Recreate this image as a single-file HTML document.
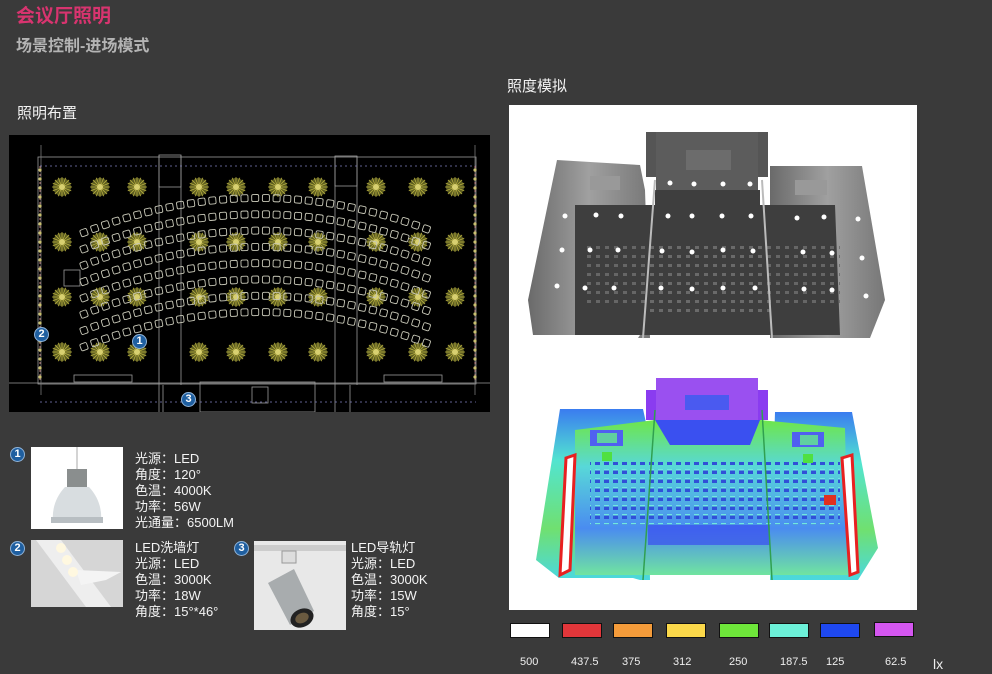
<!DOCTYPE html>
<html><head><meta charset="utf-8">
<style>
*{margin:0;padding:0;box-sizing:border-box}
body{width:992px;height:674px;background:#3a3a3a;position:relative;overflow:hidden;font-family:"Liberation Sans","Noto Sans CJK SC",sans-serif;color:#fff}
.a{position:absolute;white-space:nowrap}
.t1{left:16px;top:1px;font-size:19px;font-weight:bold;color:#d8346f}
.t2{left:16px;top:32px;font-size:16px;font-weight:bold;color:#b4b4b4}
.h{font-size:15px;color:#f2f2f2}
.badge{position:absolute;width:15px;height:15px;border-radius:50%;background:#1f5fa0;border:1px solid #8fb3d8;color:#fff;font-size:11px;font-weight:bold;text-align:center;line-height:13px}
.spec{position:absolute;font-size:13px;line-height:16px;color:#f4f4f4;white-space:nowrap}
.sw{position:absolute;top:623px;width:40px;height:15px;border:1px solid #111}
.lb{position:absolute;top:656px;font-size:11px;color:#eee}
</style></head><body>
<div class="a t1">会议厅照明</div>
<div class="a t2">场景控制-进场模式</div>
<div class="a h" style="left:17px;top:102px">照明布置</div>
<div class="a h" style="left:507px;top:75px">照度模拟</div>

<svg class="a" style="left:9px;top:135px" width="481" height="277" viewBox="9 135 481 277" id="plan">
<rect x="9" y="135" width="481" height="277" fill="#000"/>
<g stroke="#9a9a9a" stroke-width="0.8" fill="none">
<rect x="38" y="157" width="438" height="227"/>
<line x1="9" y1="383" x2="490" y2="383"/>
<line x1="41" y1="145" x2="41" y2="395" stroke="#777"/>
<line x1="475" y1="145" x2="475" y2="395" stroke="#777"/>
<rect x="159" y="155" width="22" height="32"/>
<line x1="159" y1="155" x2="159" y2="412"/><line x1="181" y1="155" x2="181" y2="385"/>
<rect x="335" y="156" width="22" height="30"/>
<line x1="335" y1="156" x2="335" y2="412"/><line x1="357" y1="156" x2="357" y2="385"/>
<rect x="200" y="382" width="115" height="30"/>
<rect x="252" y="387" width="16" height="16"/>
<rect x="74" y="375" width="58" height="7"/>
<rect x="384" y="375" width="58" height="7"/>
<rect x="64" y="270" width="16" height="16"/>
<line x1="163" y1="385" x2="163" y2="412"/><line x1="350" y1="385" x2="350" y2="412"/>
</g>
<line x1="40" y1="402" x2="476" y2="402" stroke="#8080c0" stroke-width="0.8" stroke-dasharray="2 3"/>
<line x1="40" y1="166" x2="476" y2="166" stroke="#8080c0" stroke-width="0.8" stroke-dasharray="2 3"/>
<line x1="40" y1="166" x2="40" y2="380" stroke="#c08080" stroke-width="1" stroke-dasharray="2 2"/>
<line x1="475" y1="166" x2="475" y2="380" stroke="#c08080" stroke-width="1" stroke-dasharray="2 2"/>
<g id="lamps"></g>
<g id="seats" stroke="#c8c8b8" stroke-width="0.9" fill="none"></g>
<g id="wl" fill="#c8c070"></g>
</svg>
<div class="badge" style="left:34px;top:327px">2</div>
<div class="badge" style="left:132px;top:334px">1</div>
<div class="badge" style="left:181px;top:392px">3</div>

<svg class="a" style="left:509px;top:105px" width="408" height="505" viewBox="509 105 408 505">
<defs>
<linearGradient id="gw" x1="0" x2="1"><stop offset="0" stop-color="#6a6a6a"/><stop offset="0.5" stop-color="#a0a0a0"/><stop offset="1" stop-color="#777"/></linearGradient>
<linearGradient id="cw" x1="0" x2="0" y1="0" y2="1"><stop offset="0" stop-color="#3a7cf0"/><stop offset="0.3" stop-color="#52e4d0"/><stop offset="0.7" stop-color="#70e070"/><stop offset="1" stop-color="#4ad8e0"/></linearGradient>
<linearGradient id="cf" x1="0" x2="0" y1="0" y2="1"><stop offset="0" stop-color="#6ee64a"/><stop offset="0.3" stop-color="#58d8d8"/><stop offset="0.7" stop-color="#4a8cf0"/><stop offset="1" stop-color="#70e4a0"/></linearGradient>
<pattern id="ps" width="9" height="9" patternUnits="userSpaceOnUse"><rect x="2" y="3" width="4" height="3" fill="#6a6a6a"/></pattern>
<pattern id="pc" width="9" height="9" patternUnits="userSpaceOnUse"><rect x="1" y="2" width="5" height="4" fill="#3050d8"/><rect x="1" y="1" width="5" height="1.5" fill="#70e8e0"/></pattern>
</defs>
<rect x="509" y="105" width="408" height="505" fill="#fff"/>
<polygon points="557,160 640,165 645,190 650,338 638,338 640,335 533,335 528,300" fill="url(#gw)"/>
<polygon points="770,166 862,166 885,300 870,338 770,338" fill="url(#gw)"/>
<rect x="646" y="132" width="122" height="45" fill="#555"/>
<rect x="656" y="132" width="102" height="60" fill="#5c5c5c"/>
<rect x="686" y="150" width="45" height="20" fill="#6c6c6c"/>
<polygon points="575,205 655,205 655,190 760,190 760,205 835,205 840,335 575,335" fill="#3e3e3e"/>
<polygon points="585,240 840,240 840,305 585,305" fill="url(#ps)" opacity="0.9"/>
<polygon points="650,240 760,240 770,315 645,315" fill="url(#ps)"/>
<line x1="655" y1="180" x2="643" y2="338" stroke="#bbb" stroke-width="2"/>
<line x1="762" y1="180" x2="772" y2="338" stroke="#bbb" stroke-width="2"/>
<rect x="590" y="176" width="30" height="14" fill="#999"/>
<rect x="795" y="180" width="32" height="15" fill="#999"/>
<g fill="#fff"><circle cx="670" cy="183" r="2.5"/><circle cx="694" cy="184" r="2.5"/><circle cx="723" cy="184" r="2.5"/><circle cx="750" cy="184" r="2.5"/><circle cx="596" cy="215" r="2.5"/><circle cx="621" cy="216" r="2.5"/><circle cx="668" cy="216" r="2.5"/><circle cx="692" cy="216" r="2.5"/><circle cx="722" cy="216" r="2.5"/><circle cx="751" cy="216" r="2.5"/><circle cx="797" cy="218" r="2.5"/><circle cx="824" cy="217" r="2.5"/><circle cx="590" cy="250" r="2.5"/><circle cx="618" cy="250" r="2.5"/><circle cx="662" cy="251" r="2.5"/><circle cx="692" cy="252" r="2.5"/><circle cx="723" cy="250" r="2.5"/><circle cx="753" cy="251" r="2.5"/><circle cx="803" cy="252" r="2.5"/><circle cx="832" cy="253" r="2.5"/><circle cx="585" cy="288" r="2.5"/><circle cx="614" cy="288" r="2.5"/><circle cx="661" cy="288" r="2.5"/><circle cx="692" cy="289" r="2.5"/><circle cx="723" cy="288" r="2.5"/><circle cx="755" cy="288" r="2.5"/><circle cx="804" cy="289" r="2.5"/><circle cx="832" cy="290" r="2.5"/><circle cx="557" cy="286" r="2.5"/><circle cx="562" cy="250" r="2.5"/><circle cx="565" cy="216" r="2.5"/><circle cx="858" cy="219" r="2.5"/><circle cx="862" cy="258" r="2.5"/><circle cx="866" cy="296" r="2.5"/></g>
<polygon points="560,409 643,409 648,432 650,580 640,580 633,578 559,578 536,560" fill="url(#cw)"/>
<polygon points="775,412 852,412 878,548 858,580 770,580" fill="url(#cw)"/>
<rect x="646" y="390" width="122" height="30" fill="#8a3cf0"/>
<rect x="656" y="378" width="102" height="45" fill="#9a50f0"/>
<rect x="685" y="395" width="44" height="15" fill="#4a5af0"/>
<polygon points="575,430 655,420 760,420 845,428 848,575 575,575" fill="url(#cf)"/>
<polygon points="655,420 760,420 750,445 670,445" fill="#3a50f0"/>
<polygon points="590,462 840,462 840,525 590,525" fill="url(#pc)"/>
<polygon points="648,525 770,525 770,545 648,545" fill="#3a4ef0" opacity="0.7"/>
<rect x="590" y="430" width="33" height="16" fill="#5060f0"/><rect x="597" y="433" width="20" height="10" fill="#60d0a0"/>
<rect x="792" y="432" width="32" height="15" fill="#5060f0"/><rect x="800" y="435" width="18" height="10" fill="#60d0a0"/>
<rect x="602" y="452" width="10" height="9" fill="#50e040"/><rect x="803" y="454" width="10" height="9" fill="#50e040"/>
<rect x="824" y="495" width="12" height="10" fill="#e03020"/>
<path d="M566,458 L575,455 L570,570 L560,575 Z" fill="#fff" stroke="#e82020" stroke-width="3"/>
<path d="M842,458 L852,455 L858,572 L850,575 Z" fill="#fff" stroke="#e82020" stroke-width="3"/>
<line x1="655" y1="410" x2="643" y2="580" stroke="#30a050" stroke-width="1.5"/>
<line x1="762" y1="410" x2="772" y2="580" stroke="#30a050" stroke-width="1.5"/>
</svg>

<div class="badge" style="left:10px;top:447px">1</div>
<div class="a" style="left:31px;top:447px;width:92px;height:82px;background:#fff">
<svg width="92" height="82"><line x1="46" y1="0" x2="46" y2="22" stroke="#aaa"/><rect x="36" y="22" width="20" height="18" fill="#8a8e8e"/><path d="M34,40 L58,40 Q72,55 70,76 L22,76 Q20,55 34,40Z" fill="#d8dde0"/><rect x="20" y="70" width="52" height="6" fill="#b8bec2"/></svg></div>
<div class="spec" style="left:135px;top:451px">光源：LED<br>角度：120°<br>色温：4000K<br>功率：56W<br>光通量：6500LM</div>
<div class="badge" style="left:10px;top:541px">2</div>
<div class="a" style="left:31px;top:540px;width:92px;height:67px;background:#d6d6d6">
<svg width="92" height="67"><polygon points="5,0 30,0 80,67 55,67" fill="#eee"/><polygon points="45,30 90,32 75,40 50,45" fill="#f4f4f4"/><circle cx="30" cy="8" r="5" fill="#fff8e0"/><circle cx="36" cy="20" r="5" fill="#fff8e0"/><circle cx="42" cy="32" r="5" fill="#fff8e0"/></svg></div>
<div class="spec" style="left:135px;top:540px">LED洗墙灯<br>光源：LED<br>色温：3000K<br>功率：18W<br>角度：15°*46°</div>
<div class="badge" style="left:234px;top:541px">3</div>
<div class="a" style="left:254px;top:541px;width:92px;height:89px;background:#e8e8e8">
<svg width="92" height="89"><rect x="0" y="4" width="92" height="6" fill="#ccc"/><rect x="28" y="10" width="14" height="12" fill="#ddd" stroke="#999"/><polygon points="14,42 40,28 60,70 36,84" fill="#a8acae"/><ellipse cx="48" cy="77" rx="12" ry="9" fill="#222" transform="rotate(-25 48 77)"/><ellipse cx="48" cy="77" rx="7" ry="5" fill="#6a5a40" transform="rotate(-25 48 77)"/></svg></div>
<div class="spec" style="left:351px;top:540px">LED导轨灯<br>光源：LED<br>色温：3000K<br>功率：15W<br>角度：15°</div>

<div class="sw" style="left:510px;background:#fff"></div>
<div class="sw" style="left:562px;background:#e2363a"></div>
<div class="sw" style="left:613px;background:#f49b3a"></div>
<div class="sw" style="left:666px;background:#fbd84a"></div>
<div class="sw" style="left:719px;background:#6ee63a"></div>
<div class="sw" style="left:769px;background:#6cf0d8"></div>
<div class="sw" style="left:820px;background:#1e48f0"></div>
<div class="sw" style="left:874px;top:622px;background:#d456f0"></div>
<div class="lb" style="left:520px">500</div>
<div class="lb" style="left:571px">437.5</div>
<div class="lb" style="left:622px">375</div>
<div class="lb" style="left:673px">312</div>
<div class="lb" style="left:729px">250</div>
<div class="lb" style="left:780px">187.5</div>
<div class="lb" style="left:826px">125</div>
<div class="lb" style="left:885px">62.5</div>
<div class="lb" style="left:933px;top:656px;font-size:14px">lx</div>

<script>
var NS="http://www.w3.org/2000/svg";
function el(p,t,a){var e=document.createElementNS(NS,t);for(var k in a)e.setAttribute(k,a[k]);p.appendChild(e);return e;}
var L=document.getElementById("lamps");
var xs=[62,100,137,199,236,278,318,376,418,455],ys=[187,242,297,352];
ys.forEach(function(y){xs.forEach(function(x){
 el(L,"circle",{cx:x,cy:y,r:9,fill:"#5a5a20"});
 for(var i=0;i<16;i++){var a=i*Math.PI/8;el(L,"line",{x1:x,y1:y,x2:x+10*Math.cos(a),y2:y+10*Math.sin(a),stroke:"#b8b040","stroke-width":0.8});}
 el(L,"circle",{cx:x,cy:y,r:3,fill:"#d8d070"});
});});
var S=document.getElementById("seats");
for(var k=0;k<8;k++){for(var x=84;x<=436;x+=10.7){
 var u=(x-260)/177;var y=198+35*u*u+k*16.3;
 el(S,"rect",{x:x-3.5,y:y-3.5,width:7,height:7,rx:1.5,transform:"rotate("+(u*20)+" "+x+" "+y+")"});
}}
var W=document.getElementById("wl");
for(var y=170;y<380;y+=9){el(W,"circle",{cx:40,cy:y,r:1.6});el(W,"circle",{cx:475,cy:y,r:1.6});}
</script>
</body></html>
